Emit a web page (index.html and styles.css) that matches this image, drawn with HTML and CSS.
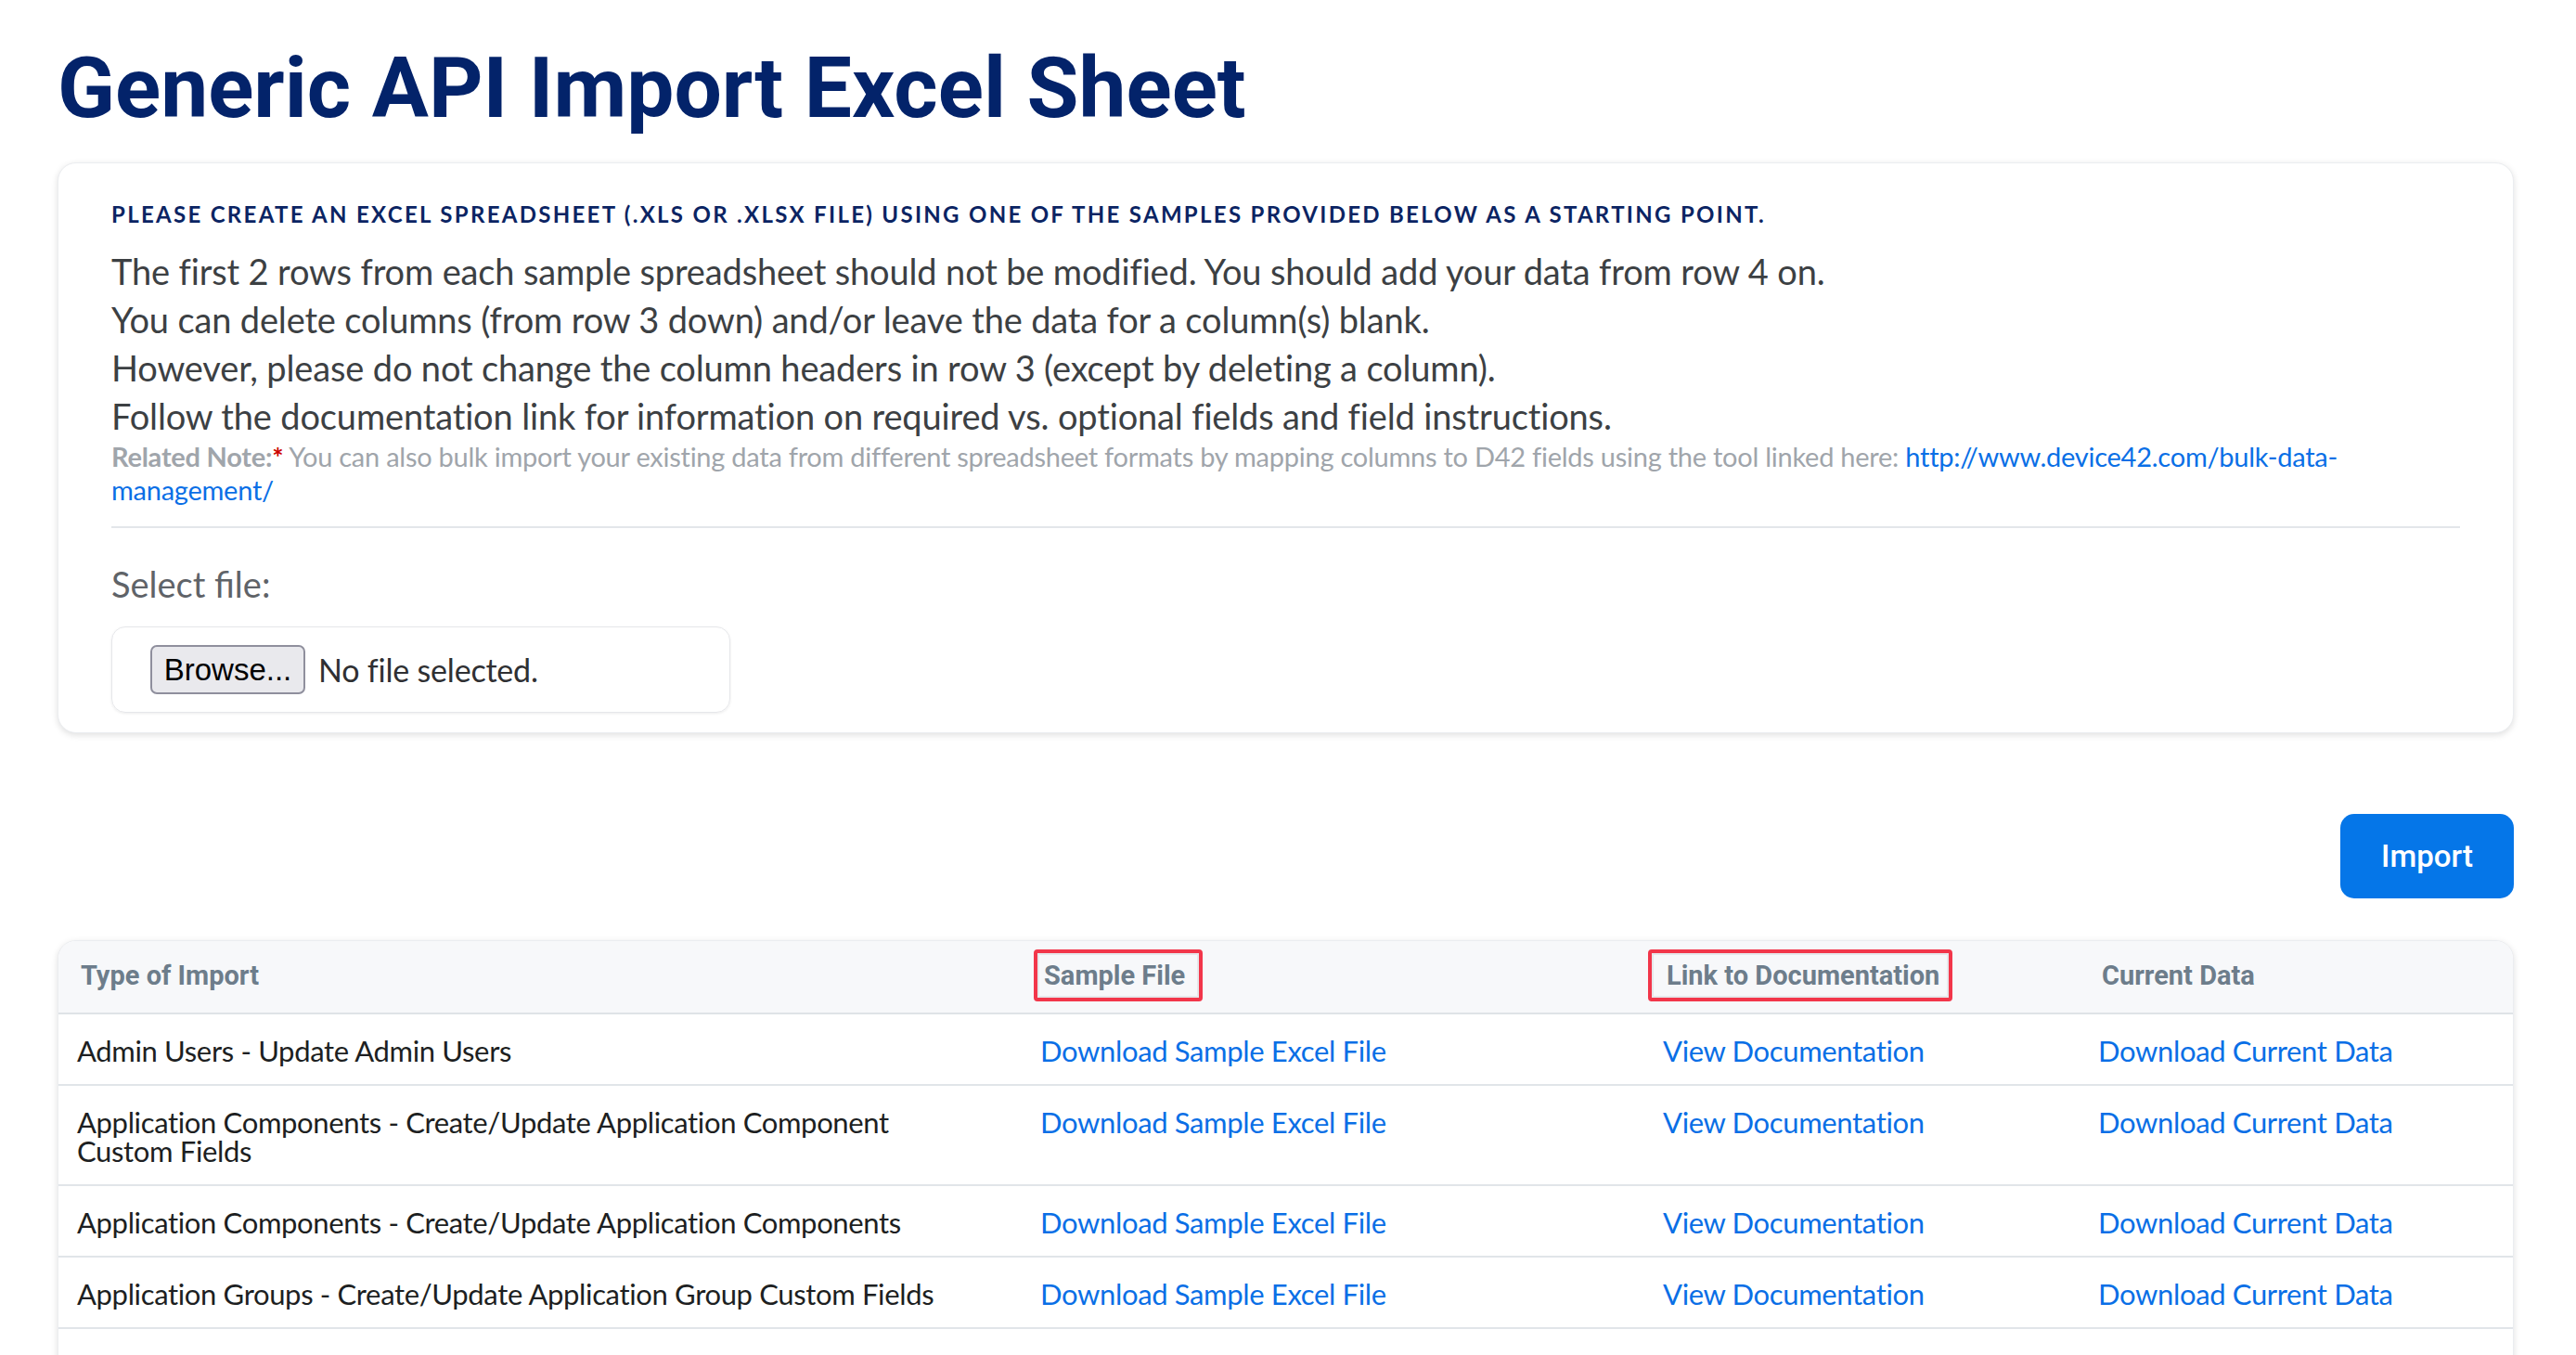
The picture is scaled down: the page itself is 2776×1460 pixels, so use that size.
FILE: index.html
```html
<!DOCTYPE html>
<html lang="en">
<head>
<meta charset="utf-8">
<title>Generic API Import Excel Sheet</title>
<link rel="stylesheet" href="styles.css">
</head>
<body>
<main class="page">
  <h1 class="page-title">Generic API Import Excel Sheet</h1>

  <section class="card intro">
    <p class="eyebrow">PLEASE CREATE AN EXCEL SPREADSHEET (.XLS OR .XLSX FILE) USING ONE OF THE SAMPLES PROVIDED BELOW AS A STARTING POINT.</p>
    <div class="instructions">
      <p>The first 2 rows from each sample spreadsheet should not be modified. You should add your data from row 4 on.</p>
      <p>You can delete columns (from row 3 down) and/or leave the data for a column(s) blank.</p>
      <p>However, please do not change the column headers in row 3 (except by deleting a column).</p>
      <p>Follow the documentation link for information on required vs. optional fields and field instructions.</p>
    </div>
    <p class="note"><span class="note-label">Related Note:</span><span class="req">*</span> You can also bulk import your existing data from different spreadsheet formats by mapping columns to D42 fields using the tool linked here: <a class="link" href="#">http://www.device42.com/bulk-data-<br>management/</a></p>
    <hr class="divider">
    <label class="field-label">Select file:</label>
    <div class="file-box">
      <span class="browse-btn">Browse...</span>
      <span class="file-name">No file selected.</span>
    </div>
  </section>

  <div class="actions">
    <button class="btn-primary" type="button">Import</button>
  </div>

  <section class="card table-card">
    <table class="import-table">
      <colgroup>
        <col class="col-type">
        <col class="col-sample">
        <col class="col-docs">
        <col class="col-data">
      </colgroup>
      <thead>
        <tr>
          <th>Type of Import</th>
          <th><span class="annot annot-sample">Sample File</span></th>
          <th><span class="annot annot-docs">Link to Documentation</span></th>
          <th>Current Data</th>
        </tr>
      </thead>
      <tbody>
        <tr>
          <td class="type-cell">Admin Users - Update Admin Users</td>
          <td><a class="link" href="#">Download Sample Excel File</a></td>
          <td><a class="link" href="#">View Documentation</a></td>
          <td><a class="link" href="#">Download Current Data</a></td>
        </tr>
        <tr>
          <td class="type-cell">Application Components - Create/Update Application Component Custom Fields</td>
          <td><a class="link" href="#">Download Sample Excel File</a></td>
          <td><a class="link" href="#">View Documentation</a></td>
          <td><a class="link" href="#">Download Current Data</a></td>
        </tr>
        <tr>
          <td class="type-cell">Application Components - Create/Update Application Components</td>
          <td><a class="link" href="#">Download Sample Excel File</a></td>
          <td><a class="link" href="#">View Documentation</a></td>
          <td><a class="link" href="#">Download Current Data</a></td>
        </tr>
        <tr>
          <td class="type-cell">Application Groups - Create/Update Application Group Custom Fields</td>
          <td><a class="link" href="#">Download Sample Excel File</a></td>
          <td><a class="link" href="#">View Documentation</a></td>
          <td><a class="link" href="#">Download Current Data</a></td>
        </tr>
        <tr>
          <td class="type-cell">Application Groups - Create/Update Application Groups</td>
          <td><a class="link" href="#">Download Sample Excel File</a></td>
          <td><a class="link" href="#">View Documentation</a></td>
          <td><a class="link" href="#">Download Current Data</a></td>
        </tr>
        <tr>
          <td class="type-cell">Assets - Create/Update Assets</td>
          <td><a class="link" href="#">Download Sample Excel File</a></td>
          <td><a class="link" href="#">View Documentation</a></td>
          <td><a class="link" href="#">Download Current Data</a></td>
        </tr>
      </tbody>
    </table>
  </section>
</main>
</body>
</html>
```

FILE: styles.css
```css
* {
  box-sizing: border-box;
}

html, body {
  margin: 0;
  padding: 0;
  background: #ffffff;
}

body {
  font-family: "Lato", "Roboto", sans-serif;
  color: #3c4043;
}

.page {
  padding: 41px 67px 0 62px;
}

.page-title {
  margin: 0;
  font-family: "Roboto", "Liberation Sans", sans-serif;
  font-weight: 700;
  font-size: 91px;
  line-height: 108px;
  color: #03236a;
  letter-spacing: 0;
}

.card {
  background: #ffffff;
  border: 1px solid #ebedf0;
  border-radius: 20px;
  box-shadow: 0 2px 7px rgba(0, 0, 0, 0.13);
}

.intro {
  margin-top: 26px;
  padding: 40px 57px 21px 57px;
}

.eyebrow {
  margin: 0;
  font-family: "Lato", sans-serif;
  font-weight: 700;
  font-size: 24px;
  line-height: 30px;
  letter-spacing: 2.3px;
  color: #0b2463;
}

.instructions {
  margin-top: 20px;
}

.instructions p {
  margin: 0;
  font-size: 38px;
  line-height: 52px;
  letter-spacing: -0.15px;
  color: #3c4043;
}

.note {
  margin: 0;
  font-size: 29px;
  line-height: 36px;
  letter-spacing: -0.25px;
  color: #a0a5ab;
}

.note-label {
  font-weight: 700;
}

.req {
  color: #cc0000;
  font-weight: 700;
}

.link {
  color: #0a6fe6;
  text-decoration: none;
}

.divider {
  margin: 21px 0 0 0;
  border: 0;
  height: 2px;
  background: #e3e6ea;
}

.field-label {
  display: block;
  margin-top: 36px;
  font-size: 38px;
  line-height: 48px;
  color: #5f6368;
}

.file-box {
  margin-top: 22px;
  width: 667px;
  height: 93px;
  display: flex;
  align-items: center;
  gap: 14px;
  padding: 0 0 0 41px;
  border: 1px solid #e6e7ea;
  border-radius: 15px;
  box-shadow: 0 1px 3px rgba(0, 0, 0, 0.08);
}

.browse-btn {
  display: inline-flex;
  align-items: center;
  justify-content: center;
  width: 167px;
  height: 53px;
  background: #e9e9ed;
  border: 2px solid #8f8f9d;
  border-radius: 7px;
  font-family: "Liberation Sans", "Arial", sans-serif;
  font-size: 33px;
  color: #000000;
}

.file-name {
  font-size: 34px;
  letter-spacing: -0.2px;
  color: #2f3033;
}

.actions {
  display: flex;
  justify-content: flex-end;
  margin-top: 87px;
}

.btn-primary {
  width: 187px;
  height: 91px;
  border: 0;
  border-radius: 15px;
  background: #0576e8;
  color: #ffffff;
  font-family: "Roboto", sans-serif;
  font-weight: 500;
  font-size: 33px;
  cursor: pointer;
}

.table-card {
  margin-top: 45px;
  overflow: hidden;
}

.import-table {
  width: 100%;
  border-collapse: collapse;
  table-layout: fixed;
}

.col-type { width: 1038px; }
.col-sample { width: 671px; }
.col-docs { width: 469px; }
.col-data { width: auto; }

.import-table th {
  text-align: left;
  background: #f7f8fa;
  font-family: "Roboto", sans-serif;
  font-weight: 700;
  font-size: 29px;
  line-height: 36px;
  color: #6d7d8b;
  padding: 19px 10px 22px 24px;
  border-bottom: 2px solid #dfe3e7;
}

.import-table td {
  vertical-align: top;
  font-size: 31px;
  line-height: 31px;
  letter-spacing: -0.35px;
  padding: 24px 10px 20px 20px;
  border-bottom: 2px solid #e1e5e9;
  color: #1d1f22;
}

.import-table td.type-cell {
  padding-right: 40px;
}

.annot {
  display: inline-block;
  border: 4px solid #f2364a;
  border-radius: 4px;
  box-shadow: inset 0 0 0 2px #e6e8eb;
  padding-top: 6px;
  padding-bottom: 6px;
  margin-top: -10px;
  margin-bottom: -10px;
}

.annot-sample {
  padding-left: 7px;
  padding-right: 15px;
  margin-left: -11px;
  margin-right: -19px;
}

.annot-docs {
  padding-left: 16px;
  padding-right: 10px;
  margin-left: -20px;
  margin-right: -14px;
}
```
